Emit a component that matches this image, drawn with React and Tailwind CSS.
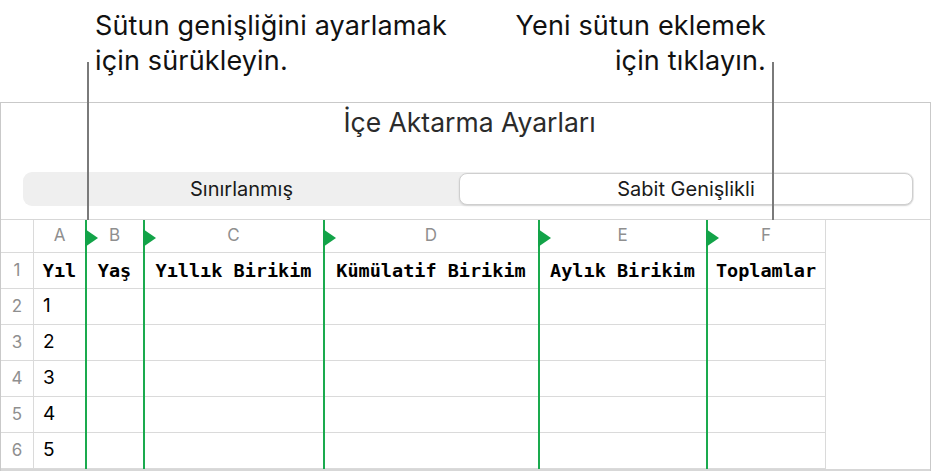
const cols = [
  { key: "A", head: "Yıl" },
  { key: "B", head: "Yaş" },
  { key: "C", head: "Yıllık Birikim" },
  { key: "D", head: "Kümülatif Birikim" },
  { key: "E", head: "Aylık Birikim" },
  { key: "F", head: "Toplamlar" },
];

// column boundaries where a resize handle sits
const handles = [85, 143, 323, 538, 706];

const sans = { fontFamily: "Inter, 'Noto Sans', sans-serif" };

const Handle = ({ left }) => (
  <div className="absolute top-0 bottom-0 w-[2px] bg-[#1aaa4e]" style={{ left: left - 1 }}>
    <svg className="absolute top-[9px] left-0" width="13" height="18" viewBox="0 0 13 18">
      <path d="M0 0 L13 9 L0 18 Z" fill="#12a348" />
    </svg>
  </div>
);

export default function App() {
  return (
    <div className="relative w-[931px] h-[471px] bg-white overflow-hidden text-[#111]" style={sans}>
      {/* callouts */}
      <div className="h-[102px] flex justify-between pl-[95px] pr-[165px] pt-[8px] text-[27px] leading-[35px] tracking-[0.15px]">
        <div>
          Sütun genişliğini ayarlamak
          <br />
          için sürükleyin.
        </div>
        <div className="text-right">
          Yeni sütun eklemek
          <br />
          için tıklayın.
        </div>
      </div>

      {/* import settings panel */}
      <div className="border-t border-l border-r border-[#c9c9c9] w-[931px]">
        <div className="text-center text-[26.5px] text-[#2b2b2b] leading-[38px] pl-[8px]">İçe Aktarma Ayarları</div>
        <div className="mt-[31px] ml-[22px] mr-[16px] h-[34px] rounded-[9px] bg-[#efefef] flex items-center p-[1px] text-[20px] text-[#1a1a1a]">
          <div className="w-[435px] text-center">Sınırlanmış</div>
          <div className="flex-1 h-full rounded-[8px] bg-white border border-[#cfcfcf] shadow-[0_1px_2px_rgba(0,0,0,0.12)] flex items-center justify-center">
            Sabit Genişlikli
          </div>
        </div>

        {/* table */}
        <div className="relative mt-[13px] border-t border-b-2 border-[#d7d7d7]">
          <div className="grid grid-cols-[33px_52px_58px_180px_215px_168px_119px_1fr] grid-rows-[33px_repeat(6,36px)]">
            <div className="border-r border-b border-[#dadada]" />
            {cols.map((c) => (
              <div key={c.key} className="border-r border-b border-[#dadada] flex items-center justify-center text-[17px] text-[#8f8f8f]">
                {c.key}
              </div>
            ))}
            <div className="row-span-7 col-start-8 row-start-1" />

            <div className="border-r border-b border-[#dadada] flex items-center justify-center text-[17px] text-[#8f8f8f]">1</div>
            {cols.map((c) => (
              <div
                key={c.key}
                className="border-r border-b border-[#dadada] flex items-center justify-center font-bold text-[18.5px] text-black"
                style={{ fontFamily: "'DejaVu Sans Mono', 'Liberation Mono', monospace" }}
              >
                {c.head}
              </div>
            ))}

            {[1, 2, 3, 4, 5].map((n) => (
              <div key={n} className="contents">
                <div className="border-r border-b border-[#dadada] flex items-center justify-center text-[17px] text-[#8f8f8f]">{n + 1}</div>
                {cols.map((c) => (
                  <div key={c.key} className="border-r border-b border-[#dadada] flex items-center pl-[9px] text-[19px] text-black">
                    {c.key === "A" ? n : ""}
                  </div>
                ))}
              </div>
            ))}
          </div>

          {handles.map((x) => (
            <Handle key={x} left={x} />
          ))}
        </div>
      </div>

      {/* leader lines */}
      <div className="absolute left-[87px] top-[62px] w-[2px] h-[158px] bg-[#7a7a7a]" />
      <div className="absolute left-[772px] top-[62px] w-[2px] h-[158px] bg-[#7a7a7a]" />
    </div>
  );
}
